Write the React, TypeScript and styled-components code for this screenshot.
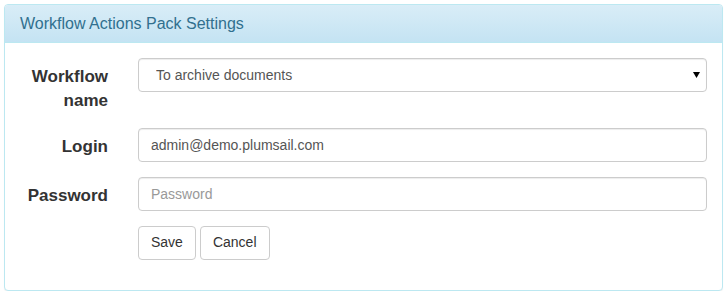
import React, { ReactElement } from 'react';
import styled, { createGlobalStyle } from 'styled-components';

const GlobalStyle = createGlobalStyle`
  html, body {
    margin: 0;
    padding: 0;
    background: #ffffff;
  }
  body {
    padding: 4px 5px 0 4px;
    font-family: "Liberation Sans", Arial, sans-serif;
    font-size: 14px;
    color: #333333;
  }
  * {
    box-sizing: border-box;
  }
`;

const App: React.FC = (): ReactElement => (
  <>
    <GlobalStyle />
    <Panel>
      <PanelHeading>
        <PanelTitle>Workflow Actions Pack Settings</PanelTitle>
      </PanelHeading>
      <PanelBody>
        <FormGrid>
          <Label>Workflow name</Label>
          <SelectWrap>
            <Select defaultValue="archive">
              <option value="archive">To archive documents</option>
            </Select>
            <Caret viewBox="0 0 7 6" width="7" height="6">
              <path d="M0 0h7L3.5 6z" fill="#000" />
            </Caret>
          </SelectWrap>

          <Label>Login</Label>
          <Input type="text" defaultValue="admin@demo.plumsail.com" />

          <Label>Password</Label>
          <Input type="password" placeholder="Password" />

          <span />
          <Buttons>
            <Button type="button">Save</Button>
            <Button type="button">Cancel</Button>
          </Buttons>
        </FormGrid>
      </PanelBody>
    </Panel>
  </>
);
export default App;

const Panel = styled.div`
  width: 719px;
  border: 1px solid #bce8f1;
  border-radius: 4px;
  background: #ffffff;
  box-shadow: 0 1px 1px rgba(0, 0, 0, 0.05);
`;

const PanelHeading = styled.div`
  padding: 10px 15px;
  border-bottom: 1px solid #bce8f1;
  border-top-left-radius: 3px;
  border-top-right-radius: 3px;
  background-image: linear-gradient(to bottom, #d9edf7 0%, #c4e3f3 100%);
`;

const PanelTitle = styled.h3`
  margin: 0;
  font-size: 16px;
  font-weight: normal;
  line-height: 17px;
  color: #31708f;
`;

const PanelBody = styled.div`
  padding: 15px 15px 0 15px;
`;

const FormGrid = styled.div`
  display: grid;
  grid-template-columns: 88px 1fr;
  column-gap: 30px;
  row-gap: 15px;
  padding-bottom: 30px;
`;

const Label = styled.label`
  padding-top: 7px;
  font-size: 17px;
  font-weight: bold;
  line-height: 24px;
  text-align: right;
  color: #333333;
`;

const SelectWrap = styled.div`
  position: relative;
  height: 34px;
`;

const Select = styled.select`
  appearance: none;
  width: 100%;
  height: 34px;
  padding: 6px 12px 6px 17px;
  font-family: "Liberation Sans", Arial, sans-serif;
  font-size: 14px;
  color: #555555;
  background: #ffffff;
  border: 1px solid #cccccc;
  border-radius: 4px;
  box-shadow: inset 0 1px 1px rgba(0, 0, 0, 0.075);
  outline: none;
`;

const Caret = styled.svg`
  position: absolute;
  right: 7px;
  top: 14px;
  pointer-events: none;
`;

const Input = styled.input`
  width: 100%;
  height: 34px;
  padding: 6px 12px;
  font-family: "Liberation Sans", Arial, sans-serif;
  font-size: 14px;
  color: #555555;
  background: #ffffff;
  border: 1px solid #cccccc;
  border-radius: 4px;
  box-shadow: inset 0 1px 1px rgba(0, 0, 0, 0.075);
  outline: none;

  &::placeholder {
    color: #999999;
  }
`;

const Buttons = styled.div`
  display: flex;
  gap: 4px;
`;

const Button = styled.button`
  height: 34px;
  padding: 6px 12px;
  font-family: "Liberation Sans", Arial, sans-serif;
  font-size: 14px;
  line-height: 1.428571;
  color: #333333;
  background: #ffffff;
  border: 1px solid #cccccc;
  border-radius: 4px;
  cursor: pointer;
`;
